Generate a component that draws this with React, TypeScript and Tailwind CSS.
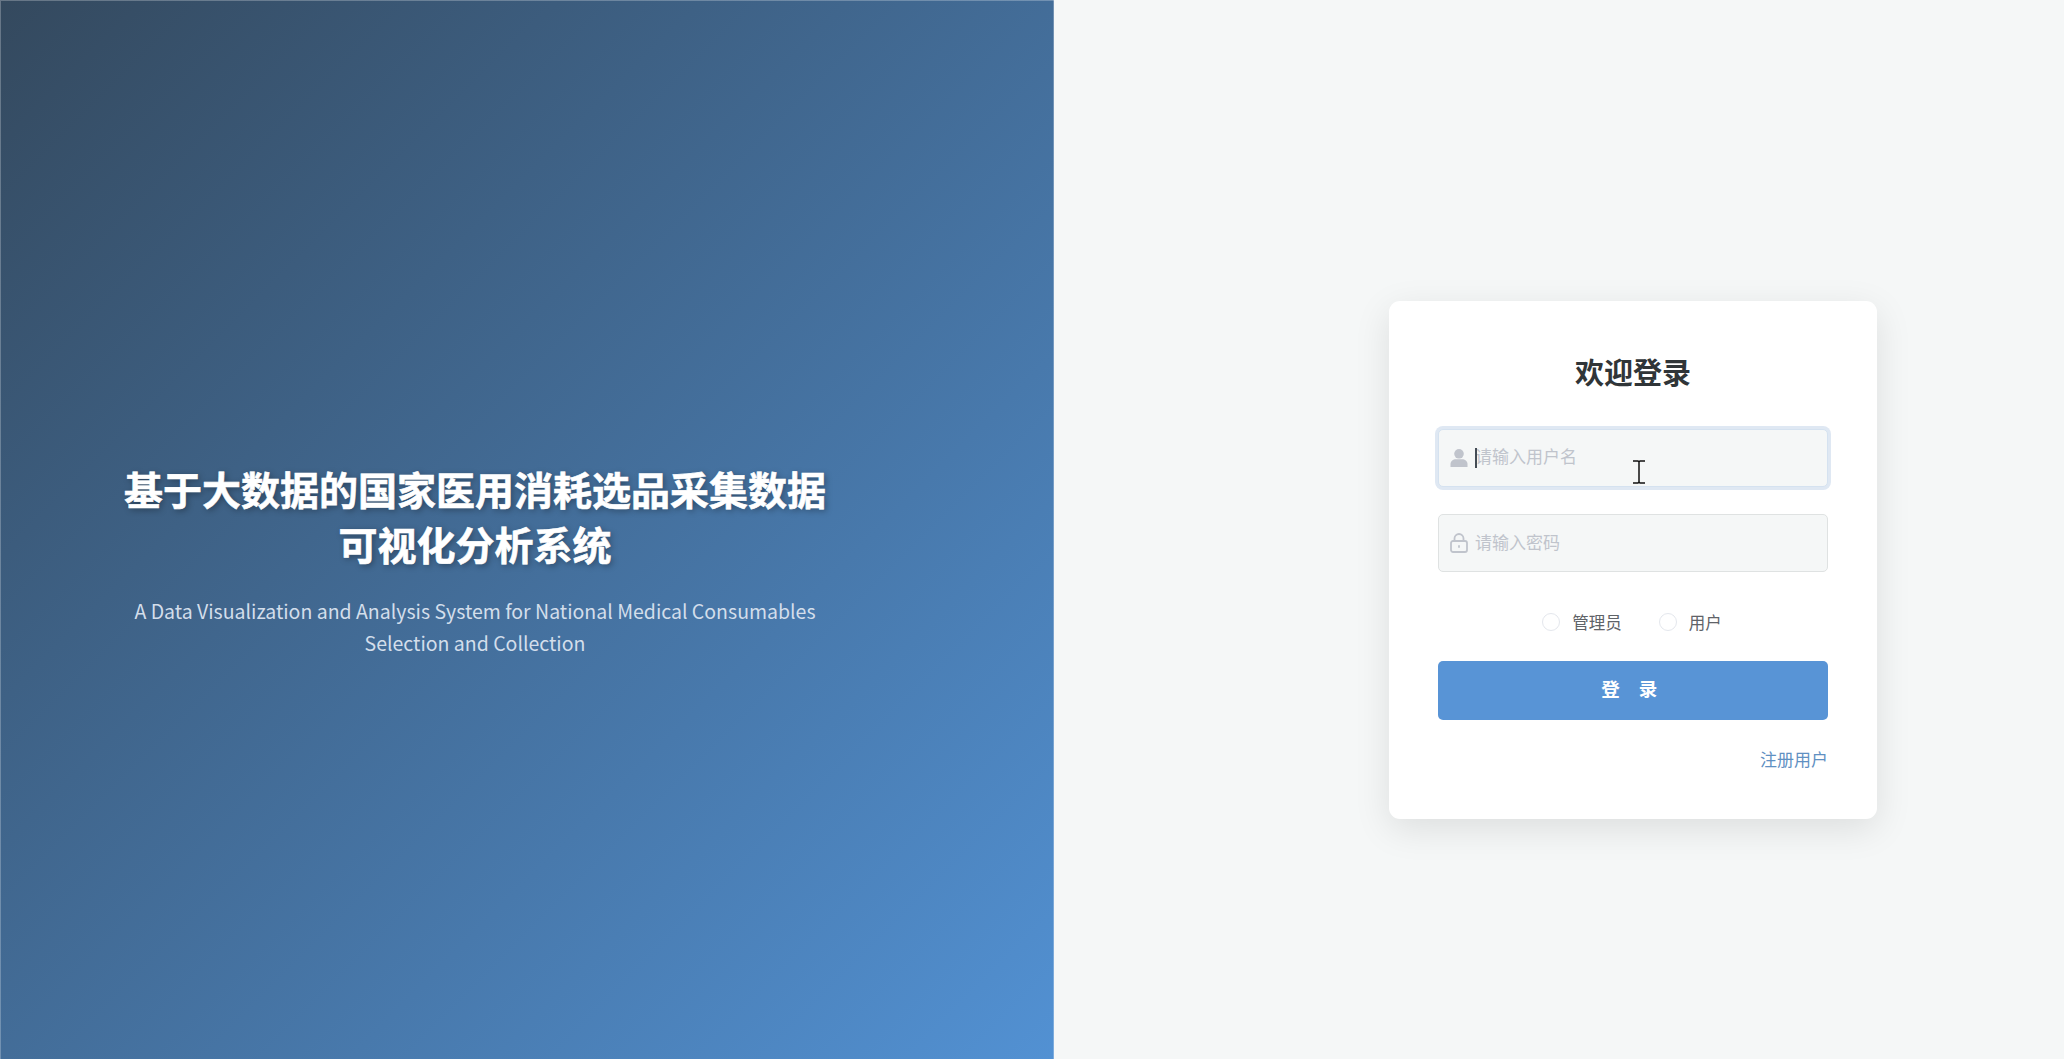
import React from 'react';

const fontCjk = "font-['Noto_Sans_CJK_SC','Noto_Sans',sans-serif]";

const UserIcon = () => (
  <svg viewBox="0 0 18 18" className="w-[18px] h-[18px]" fill="#c0c4cc">
    <circle cx="9" cy="4.800" r="4.800" />
    <path d="M0.500 18v-3c0-3 2.800-4.800 5.200-4.800h6.600c2.400 0 5.200 1.800 5.200 4.800v3z" />
  </svg>
);

const LockIcon = () => (
  <svg viewBox="0 0 18 20" className="w-[18px] h-[20px]" fill="none" stroke="#c0c4cc" strokeWidth="1.800">
    <rect x="1" y="8" width="16" height="11" rx="2" />
    <path d="M4.500 8V5.500a4.500 4.500 0 0 1 9 0V8" />
    <path d="M9 12.200v2.600" />
  </svg>
);

const TextCursor = () => (
  <svg viewBox="0 0 14 24" className="absolute left-[194px] top-[31px] w-[14px] h-[24px]" fill="none" stroke="#111" strokeWidth="1.500">
    <path d="M1 1h5l1 1 1-1h5M7 2v20M1 23h5l1-1 1 1h5" />
  </svg>
);

const App: React.FC = () => {
  return (
    <div className={`flex h-[1059px] w-full overflow-hidden ${fontCjk}`}>
      <div className="w-[1054px] shrink-0 flex flex-col items-center justify-center pt-[60px] pr-[104px] text-center bg-[linear-gradient(135deg,#34495e,#5291d3)] shadow-[inset_1px_1px_0_rgba(255,255,255,0.25),inset_-1px_0_0_rgba(255,255,255,0.25)]">
        <h1 className="w-[760px] text-[39px] leading-[55px] font-bold text-white [-webkit-text-stroke:0.6px_white] [text-shadow:2px_2px_6px_rgba(0,0,0,0.35)]">
          基于大数据的国家医用消耗选品采集数据
          <br />
          可视化分析系统
        </h1>
        <p className="mt-[24px] w-[760px] text-[19.500px] leading-[32px] text-[#d3deeb]">
          A Data Visualization and Analysis System for National Medical Consumables
          <br />
          Selection and Collection
        </p>
      </div>

      <div className="flex-1 flex items-center justify-end pt-[61px] pr-[187px] bg-[#f5f7f7]">
        <div className="w-[488px] rounded-[11px] bg-white px-[49px] pt-[50px] pb-[47px] shadow-[0_10px_36px_rgba(0,0,0,0.1)]">
          <h2 className="text-center text-[29px] leading-[40px] font-bold text-[#303538]">欢迎登录</h2>

          <div className="relative mt-[38px]">
            <div className="absolute left-[12px] top-[20px]">
              <UserIcon />
            </div>
            <input
              placeholder="请输入用户名"
              className="w-full h-[58px] rounded-[5px] border border-[#d5e2f0] bg-[#f5f7f7] pl-[36px] pr-3 pb-[5px] text-[17px] outline-none ring-[3px] ring-[#dfe8f3] placeholder:text-[#c0c4cc]"
            />
            <span className="absolute left-[37px] top-[19px] w-[2px] h-[20px] bg-[#444c55]" />
            <TextCursor />
          </div>

          <div className="relative mt-[27px]">
            <div className="absolute left-[12px] top-[19px]">
              <LockIcon />
            </div>
            <input
              placeholder="请输入密码"
              className="w-full h-[58px] rounded-[5px] border border-[#dfe2e2] bg-[#f5f7f7] pl-[36px] pr-3 pb-[4px] text-[17px] outline-none placeholder:text-[#c0c4cc]"
            />
          </div>

          <div className="mt-[38px] flex items-center justify-center gap-[37px] pr-[2px] text-[16.500px] leading-[24px] text-[#5f6368]">
            <label className="flex items-center gap-[12px]">
              <span className="w-[18px] h-[18px] rounded-full border border-[#e4e7ed] bg-white" />
              管理员
            </label>
            <label className="flex items-center gap-[12px]">
              <span className="w-[18px] h-[18px] rounded-full border border-[#e4e7ed] bg-white" />
              用户
            </label>
          </div>

          <button className="mt-[27px] block w-full h-[59px] rounded-[5px] bg-[#5894d6] pb-[3px] text-[18.500px] font-bold tracking-[7.500px] text-white">
            登 录
          </button>

          <div className="mt-[27px] pb-[1px] text-right text-[17px] leading-[24px] text-[#5f90c2]">注册用户</div>
        </div>
      </div>
    </div>
  );
};

export default App;
